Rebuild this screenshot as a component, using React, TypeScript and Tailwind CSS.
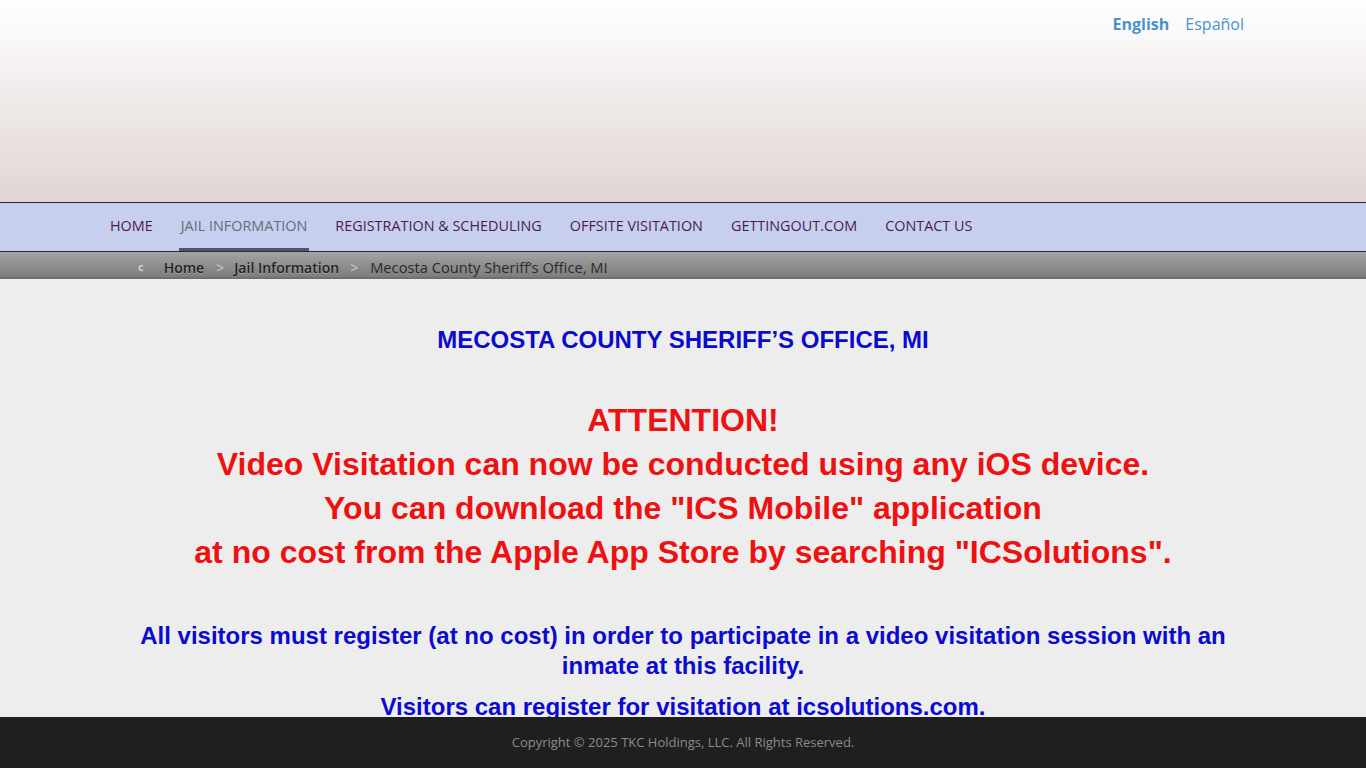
const navItems = [
  { label: "HOME", active: false },
  { label: "JAIL INFORMATION", active: true },
  { label: "REGISTRATION & SCHEDULING", active: false },
  { label: "OFFSITE VISITATION", active: false },
  { label: "GETTINGOUT.COM", active: false },
  { label: "CONTACT US", active: false },
];

const redLines = [
  "Video Visitation can now be conducted using any iOS device.",
  'You can download the "ICS Mobile" application',
  'at no cost from the Apple App Store by searching "ICSolutions".',
];

export default function App() {
  return (
    <div className="min-h-screen bg-[#ededed] font-['Open_Sans',sans-serif]">
      <header className="h-[202px] bg-gradient-to-b from-white to-[#e0d5d4]">
        <div className="mx-auto flex w-[1150px] justify-end gap-4 pt-[12px] pr-[14px] text-[16px] leading-[24px]">
          <a className="font-bold text-[#4a93cb]">English</a>
          <a className="text-[#4a93cb]">Español</a>
        </div>
      </header>

      <nav className="h-[50px] border-y border-[#2b2b35] bg-[#c6d0ee]">
        <ul className="mx-auto flex h-full w-[1150px] gap-[24px]">
          {navItems.map((item) => (
            <li
              key={item.label}
              className={
                item.active
                  ? "flex items-center border-b-[3px] border-[#55556a] px-[2px] text-[14.4px] text-[#6a6a78]"
                  : "flex items-center px-[2px] pb-[3px] text-[14.4px] text-[#4d1a4e]"
              }
            >
              {item.label}
            </li>
          ))}
        </ul>
      </nav>

      <div className="h-[27px] border-b-2 border-[#707070] bg-gradient-to-b from-[#a3a3a3] to-[#7d7d7d]">
        <div className="mx-auto flex h-full w-[1150px] items-center pt-[5px] pl-[30px] text-[14px]">
          <span className="mr-[20px] text-[11px] font-bold text-[#cfcfcf]">c</span>
          <span className="font-semibold text-[#222] [text-shadow:0_1px_1px_rgba(255,255,255,0.3)]">Home</span>
          <span className="mr-[10px] ml-[12px] text-[#d0d0d0]">&gt;</span>
          <span className="font-semibold text-[#222] [text-shadow:0_1px_1px_rgba(255,255,255,0.3)]">Jail Information</span>
          <span className="mr-[12px] ml-[11px] text-[#d0d0d0]">&gt;</span>
          <span className="text-[14.7px] text-[#2a2a2a]">Mecosta County Sheriff’s Office, MI</span>
        </div>
      </div>

      <main className="mx-auto w-[1150px] pb-[80px] text-center font-['Liberation_Sans',Arial,sans-serif] font-bold">
        <h1 className="pt-[47px] text-[24px] leading-[28px] text-[#0a0ad0]">
          MECOSTA COUNTY SHERIFF’S OFFICE, MI
        </h1>
        <div className="mt-[44px] text-[32px] leading-[44px] text-[#ee1111]">
          <p>ATTENTION!</p>
          {redLines.map((line) => (
            <p key={line}>{line}</p>
          ))}
        </div>
        <p className="mt-[47px] text-[24px] leading-[30px] text-[#0a0ad0]">
          All visitors must register (at no cost) in order to participate in a video visitation session with an inmate at this facility.
        </p>
        <p className="mt-[11px] text-[24px] leading-[30px] text-[#0a0ad0]">
          Visitors can register for visitation at icsolutions.com.
        </p>
      </main>

      <footer className="fixed inset-x-0 bottom-0 flex h-[51px] items-center justify-center bg-[#1f1f1f] text-[13px] text-[#8c8c8c]">
        Copyright © 2025 TKC Holdings, LLC. All Rights Reserved.
      </footer>
    </div>
  );
}
